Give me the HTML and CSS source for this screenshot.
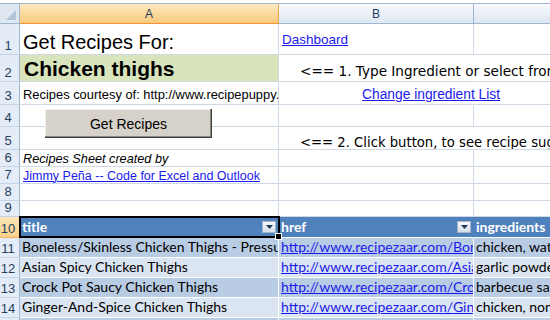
FILE: index.html
```html
<!DOCTYPE html>
<html>
<head>
<meta charset="utf-8">
<link rel="stylesheet" href="styles.css">
</head>
<body>
<div class="sheet">
  <div class="grid">
    <div class="corner"><svg width="12" height="12" viewBox="0 0 12 12"><polygon points="11,1 11,11 1,11" fill="#b4c5da"/></svg></div>
    <div class="ch ch-sel">A</div>
    <div class="ch">B</div>
    <div class="ch"></div>

    <div class="rh">1</div>
    <div class="c"><span class="t-title">Get Recipes For:</span></div>
    <div class="c"><a class="lnk t-13 pb8">Dashboard</a></div>
    <div class="c"></div>

    <div class="rh">2</div>
    <div class="c green"><span class="t-ing">Chicken thighs</span></div>
    <div class="c spill"><span class="t-verd pl21 pb2">&lt;== 1. Type Ingredient or select from list</span></div>
    <div class="c"></div>

    <div class="rh">3</div>
    <div class="c"><span class="t-128 pb2">Recipes courtesy of: http://www.recipepuppy.com</span></div>
    <div class="c spill"><a class="lnk t-135 pl83 pb2">Change ingredient List</a></div>
    <div class="c"></div>

    <div class="rh">4</div>
    <div class="c"></div>
    <div class="c"></div>
    <div class="c"></div>

    <div class="rh">5</div>
    <div class="c"></div>
    <div class="c spill"><span class="t-verd2 pl21 pb0">&lt;== 2. Click button, to see recipe suggestions</span></div>
    <div class="c"></div>

    <div class="rh">6</div>
    <div class="c"><span class="t-127 ital pb0">Recipes Sheet created by</span></div>
    <div class="c"></div>
    <div class="c"></div>

    <div class="rh">7</div>
    <div class="c"><a class="lnk t-125 pb1">Jimmy Peña -- Code for Excel and Outlook</a></div>
    <div class="c"></div>
    <div class="c"></div>

    <div class="rh">8</div>
    <div class="c"></div>
    <div class="c"></div>
    <div class="c"></div>

    <div class="rh">9</div>
    <div class="c"></div>
    <div class="c"></div>
    <div class="c"></div>

    <div class="rh rh-sel">10</div>
    <div class="c th"><span>title</span><span class="dd"><svg width="7" height="4" viewBox="0 0 7 4"><polygon points="0,0 7,0 3.5,4" fill="#1f3b62"/></svg></span></div>
    <div class="c th"><span>href</span><span class="dd"><svg width="7" height="4" viewBox="0 0 7 4"><polygon points="0,0 7,0 3.5,4" fill="#1f3b62"/></svg></span></div>
    <div class="c th"><span>ingredients</span></div>

    <div class="rh">11</div>
    <div class="c td dark"><span>Boneless/Skinless Chicken Thighs - Pressure Cooker</span></div>
    <div class="c td dark"><a class="lnk">http://www.recipezaar.com/Boneless-Skinless-Chicken-Thighs</a></div>
    <div class="c td dark"><span>chicken, water, onion</span></div>

    <div class="rh">12</div>
    <div class="c td light"><span>Asian Spicy Chicken Thighs</span></div>
    <div class="c td light"><a class="lnk">http://www.recipezaar.com/Asian-Spicy-Chicken-Thighs</a></div>
    <div class="c td light"><span>garlic powder, ginger</span></div>

    <div class="rh">13</div>
    <div class="c td dark"><span>Crock Pot Saucy Chicken Thighs</span></div>
    <div class="c td dark"><a class="lnk">http://www.recipezaar.com/Crock-Pot-Saucy-Chicken-Thighs</a></div>
    <div class="c td dark"><span>barbecue sauce, chicken</span></div>

    <div class="rh">14</div>
    <div class="c td light"><span>Ginger-And-Spice Chicken Thighs</span></div>
    <div class="c td light"><a class="lnk">http://www.recipezaar.com/Ginger-And-Spice-Chicken-Thighs</a></div>
    <div class="c td light"><span>chicken, nonstick spray</span></div>

    <div class="rh">15</div>
    <div class="c td dark"></div>
    <div class="c td dark"></div>
    <div class="c td dark"></div>
  </div>
  <button class="btn">Get Recipes</button>
  <div class="selbox"><div class="handle"></div></div>
</div>
</body>
</html>
```

FILE: styles.css
```css
html, body {
  margin: 0;
  padding: 0;
  background: #ffffff;
}
body {
  font-family: "Liberation Sans", Arial, sans-serif;
  color: #000;
}
.sheet {
  position: relative;
  width: 550px;
  height: 320px;
  overflow: hidden;
  padding-top: 3px;
  box-sizing: border-box;
}
.grid {
  display: grid;
  grid-template-columns: 20px 259px 195px 300px;
  grid-template-rows: 21px 31px 27px 23px 22px 23px 17px 17px 17px 16px 21px 20px 20px 20px 20px 20px;
  width: 774px;
}
.corner {
  box-sizing: border-box;
  background: #dfe7f1;
  border-top: 1px solid #9eb6ce;
  border-right: 1px solid #9eb6ce;
  border-bottom: 1px solid #9eb6ce;
  display: flex;
  align-items: flex-end;
  justify-content: flex-end;
  padding: 0 2px 2px 0;
}
.corner svg { display: block; }
.ch {
  box-sizing: border-box;
  border-top: 1px solid #9eb6ce;
  border-right: 1px solid #9eb6ce;
  border-bottom: 1px solid #9eb6ce;
  background: linear-gradient(#f8fafd, #dde6f2);
  color: #1f3b5f;
  font-size: 12px;
  display: flex;
  align-items: center;
  justify-content: center;
}
.ch-sel {
  background: linear-gradient(#fde8bf, #f8cb7d);
  border-bottom-color: #f29436;
  border-right-color: #f0a64f;
}
.rh {
  box-sizing: border-box;
  background: #e4ecf7;
  border-right: 1px solid #9eb6ce;
  border-bottom: 1px solid #c5d4e7;
  color: #27415f;
  font-size: 13px;
  line-height: 1;
  display: flex;
  align-items: flex-end;
  justify-content: center;
  padding: 0 3px 2px 0;
}
.rh-sel {
  background: linear-gradient(#fde4b5, #f9d18c);
  border-bottom-color: #f3b25a;
}
.c {
  box-sizing: border-box;
  border-right: 1px solid #d0d7e5;
  border-bottom: 1px solid #d0d7e5;
  display: flex;
  align-items: flex-end;
  padding: 0 3px;
  white-space: nowrap;
  overflow: hidden;
  line-height: 1;
  min-width: 0;
}
.spill {
  overflow: visible;
  border-right-color: transparent;
}
.green { background: #d8e4bc; }
.t-title { font-size: 20px; padding-bottom: 2px; }
.t-ing { font-size: 21px; font-weight: bold; padding-bottom: 2px; padding-left: 1px; }
.t-125 { font-size: 12.5px; }
.t-127 { font-size: 12.7px; }
.t-128 { font-size: 12.9px; }
.t-13 { font-size: 13.5px; }
.t-135 { font-size: 13.8px; }
.t-verd { font-family: "DejaVu Sans", Verdana, sans-serif; font-size: 13.6px; }
.t-verd2 { font-family: "DejaVu Sans", Verdana, sans-serif; font-size: 13.2px; }
.ital { font-style: italic; }
.pl21 { padding-left: 18px; }
.pl83 { padding-left: 80px; }
.pb0 { padding-bottom: 0; }
.pb1 { padding-bottom: 1px; }
.pb2 { padding-bottom: 2px; }
.pb8 { padding-bottom: 8px; }
.lnk {
  color: #1a1aee;
  text-decoration: underline;
}
.th {
  background: #4f81bd;
  color: #ffffff;
  font-family: Lato, "Liberation Sans", sans-serif;
  font-weight: bold;
  font-size: 14px;
  border-right-color: #4f81bd;
  border-bottom-color: #ffffff;
  padding: 0 2px 3px 2px;
}
.th .dd {
  margin-left: auto;
  align-self: center;
  width: 14px;
  height: 12px;
  box-sizing: border-box;
  border: 1px solid #a5b5c9;
  background: linear-gradient(#f6f8fb, #d7dfea);
  display: flex;
  align-items: center;
  justify-content: center;
  margin-top: 2px;
}
.th .dd svg { display: block; }
.td {
  font-family: Lato, "Liberation Sans", sans-serif;
  font-size: 14px;
  border-right-color: #ffffff;
  border-bottom-color: #ffffff;
  padding: 0 2px 3px 2px;
}
.dark { background: #b8cce4; }
.light { background: #dbe5f1; }
.btn {
  position: absolute;
  left: 45px;
  top: 109px;
  width: 167px;
  height: 29px;
  margin: 0;
  padding: 0;
  border: none;
  background: #d6d2ca;
  box-shadow: inset -1px -1px 0 #404040, inset -2px -2px 0 #8a8780, inset 1px 1px 0 #f4f2ee;
  font-family: "Liberation Sans", Arial, sans-serif;
  font-size: 14px;
  color: #000;
}
.selbox {
  position: absolute;
  left: 19px;
  top: 216px;
  width: 261px;
  height: 22px;
  box-sizing: border-box;
  border: 2px solid #000;
}
.handle {
  position: absolute;
  right: -4px;
  bottom: -4px;
  width: 5px;
  height: 5px;
  background: #000;
  border: 1px solid #fff;
}
```
